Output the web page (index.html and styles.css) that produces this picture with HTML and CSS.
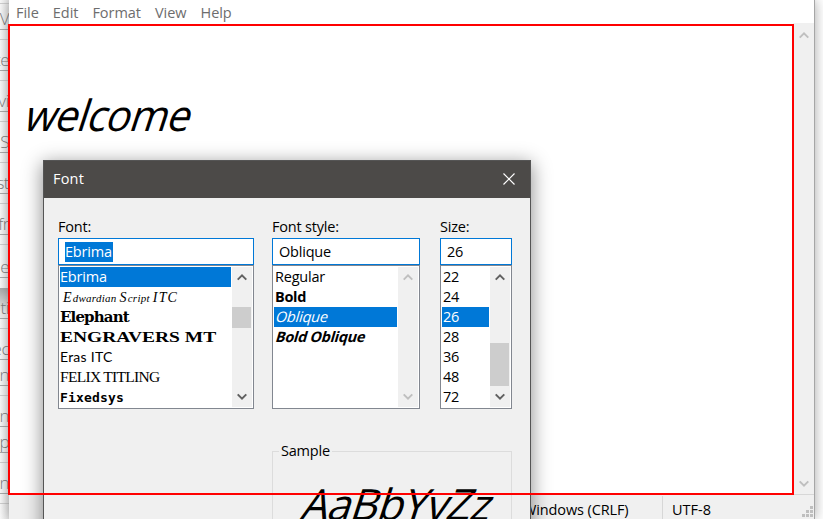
FILE: index.html
```html
<!DOCTYPE html>
<html lang="en">
<head>
<meta charset="utf-8">
<title>Font</title>
<link rel="stylesheet" href="styles.css">
</head>
<body>
<div class="desktop">
  <div class="strip">
    <div class="cell first">V</div>
    <div class="cell">te</div>
    <div class="cell">vi</div>
    <div class="cell">S</div>
    <div class="cell">st</div>
    <div class="cell">fr</div>
    <div class="cell tall">e</div>
    <div class="cell shade">ti</div>
    <div class="cell">ec</div>
    <div class="cell joined">in</div>
    <div class="cell">tin</div>
    <div class="cell joined">op</div>
    <div class="cell">in</div>
    <div class="cell">t</div>
  </div>

  <main class="notepad">
    <nav class="menu"><span>File</span><span>Edit</span><span>Format</span><span>View</span><span>Help</span></nav>
    <div class="workspace">
      <div class="document">welcome</div>
      <div class="scroll page-scroll">
        <svg viewBox="0 0 10 7"><path d="M.7 5.600 5 1.400l4.300 4.200"/></svg>
        <svg viewBox="0 0 10 7"><path d="M.7 1.400 5 5.600 9.300 1.400"/></svg>
      </div>
    </div>
    <footer class="status">
      <span class="eol">Windows (CRLF)</span><span class="encoding">UTF-8</span>
      <svg class="grip" viewBox="0 0 12 12"><path d="M8 0h3v3H8zM4 4h3v3H4zM8 4h3v3H8zM0 8h3v3H0zM4 8h3v3H4zM8 8h3v3H8z"/></svg>
    </footer>
  </main>

  <section class="dialog">
    <header class="title"><span>Font</span>
      <svg viewBox="0 0 12 12"><path d="M.5.5l11 11M11.500.5l-11 11"/></svg>
    </header>
    <div class="choices">
      <div class="field">
        <label>Font:</label>
        <div class="input"><mark>Ebrima</mark></div>
        <div class="list">
          <ul>
            <li class="selected">Ebrima</li>
            <li><span class="edwardian"><b>E</b>dwardian <b>S</b>cript <b>ITC</b></span></li>
            <li><span class="elephant">Elephant</span></li>
            <li><span class="engravers">ENGRAVERS MT</span></li>
            <li><span class="eras">Eras ITC</span></li>
            <li><span class="felix">FELIX TITLING</span></li>
            <li><span class="fixedsys">Fixedsys</span></li>
          </ul>
          <div class="scroll active">
            <svg viewBox="0 0 10 7"><path d="M.7 5.600 5 1.400l4.300 4.200"/></svg>
            <i class="thumb"></i>
            <svg viewBox="0 0 10 7"><path d="M.7 1.400 5 5.600 9.300 1.400"/></svg>
          </div>
        </div>
      </div>
      <div class="field">
        <label>Font style:</label>
        <div class="input">Oblique</div>
        <div class="list">
          <ul>
            <li>Regular</li>
            <li class="bold">Bold</li>
            <li class="selected"><span class="oblique">Oblique</span></li>
            <li class="bold"><span class="oblique">Bold Oblique</span></li>
          </ul>
          <div class="scroll">
            <svg viewBox="0 0 10 7"><path d="M.7 5.600 5 1.400l4.300 4.200"/></svg>
            <svg viewBox="0 0 10 7"><path d="M.7 1.400 5 5.600 9.300 1.400"/></svg>
          </div>
        </div>
      </div>
      <div class="field sizes">
        <label>Size:</label>
        <div class="input">26</div>
        <div class="list">
          <ul>
            <li>22</li><li>24</li><li class="selected">26</li><li>28</li><li>36</li><li>48</li><li>72</li>
          </ul>
          <div class="scroll active">
            <svg viewBox="0 0 10 7"><path d="M.7 5.600 5 1.400l4.300 4.200"/></svg>
            <i class="thumb low"></i>
            <svg viewBox="0 0 10 7"><path d="M.7 1.400 5 5.600 9.300 1.400"/></svg>
          </div>
        </div>
      </div>
    </div>
    <fieldset class="sample">
      <legend>Sample</legend>
      <div class="specimen">AaBbYvZz</div>
    </fieldset>
  </section>
  <div class="highlight"></div>
</div>
</body>
</html>
```
FILE: styles.css
```css
* { box-sizing: border-box; }
body { margin: 0; overflow: hidden; background: #fff; }
.desktop {
  position: relative;
  width: 823px;
  height: 519px;
  overflow: hidden;
  background: #fff;
  color: #000;
  font: 14.5px/20px "Open Sans", "Noto Sans", sans-serif;
  letter-spacing: -0.2px;
  white-space: nowrap;
}
svg { display: block; fill: none; stroke: currentColor; }

/* window that shows behind the editor */
.strip {
  width: 9px;
  height: 519px;
  padding-top: 3px;
  overflow: hidden;
  background: linear-gradient(90deg, #fafafa, #e6e6e6);
  color: #808080;
  font-size: 17px;
  font-weight: 300;
  letter-spacing: -.5px;
}
.cell {
  display: flex;
  justify-content: flex-end;
  align-items: flex-end;
  height: 32px;
  margin-bottom: 9px;
  border-top: 1px solid #cfcfcf;
  border-bottom: 1px solid #aaa;
}
.cell.first { height: 27px; }
.cell.tall { height: 34px; margin-bottom: 10px; }
.cell.shade { height: 31px; border-top: 0; background: linear-gradient(#aaa, #eee 24px); }
.cell.joined { height: 26px; margin-top: -9px; border-top: 0; }

.notepad {
  position: absolute;
  left: 9px;
  top: 0;
  width: 806px;
  height: 519px;
  display: flex;
  flex-direction: column;
  background: #fff;
  border-right: 1px solid #a6a6a6;
  box-shadow: 0 0 12px rgba(0, 0, 0, .35);
}
.menu {
  display: flex;
  gap: 14px;
  height: 23px;
  padding: 3px 0 0 7px;
  color: #6d6d6d;
  letter-spacing: -.04px;
}
.workspace { display: flex; flex: 1; }
.document {
  flex: 1;
  padding: 65px 0 0 14px;
  font-size: 43px;
  line-height: 54px;
  letter-spacing: -.8px;
  transform: skewX(-18deg) scaleX(.955);
  transform-origin: 0 106px;
}
.status {
  display: flex;
  align-items: center;
  height: 25px;
  border-top: 1px solid #d7d7d7;
  background: #f0f0f0;
}
.status span { height: 23px; padding-top: 4px; }
.eol { width: 148px; margin-left: 506px; padding-left: 8px; border-right: 1px solid #d7d7d7; letter-spacing: -.12px; }
.encoding { padding-left: 9px; letter-spacing: 0; }
.grip { width: 12px; height: 12px; margin: 10px 0 0 auto; fill: #bfbfbf; stroke: none; }

.dialog {
  position: absolute;
  left: 43px;
  top: 160px;
  width: 488px;
  height: 420px;
  border: 1px solid #555;
  background: #f0f0f0;
  box-shadow: 0 4px 18px 1px rgba(0, 0, 0, .43);
}
.title {
  display: flex;
  align-items: center;
  justify-content: space-between;
  height: 37px;
  padding: 0 15px 1px 9px;
  background: #4c4a48;
  color: #fff;
  letter-spacing: .2px;
}
.title svg { width: 12px; height: 12px; stroke-width: 1.2; }
.choices {
  display: grid;
  grid-template-columns: 195px 148px 73px;
  gap: 0 19px;
  padding: 19px 0 0 14px;
}
.field:first-child { width: 196px; }
.field.sizes { margin-left: 1px; }
.field label { display: block; height: 21px; }
.input {
  height: 27px;
  padding: 3px 6px;
  border: 1px solid #0078d7;
  background: #fff;
}
mark { display: inline-block; height: 20px; padding: 0 1px 0 0; background: #0078d7; color: #fff; }
.list {
  display: flex;
  justify-content: space-between;
  height: 144px;
  padding: 1px;
  border: 1px solid #828790;
  background: #fff;
}
ul { flex: 1; margin: 0 1px 0 0; padding: 0; list-style: none; }
li { height: 20px; padding-left: 1px; }
.field:first-child li { padding-left: 0; }
.selected { background: #0078d7; color: #fff; }
.bold { font-weight: 700; letter-spacing: -.3px; }
li span { display: inline-block; transform-origin: 0 70%; }
.oblique { transform: skewX(-16deg); }
.scroll {
  position: relative;
  display: flex;
  flex-direction: column;
  align-items: center;
  justify-content: space-between;
  width: 20px;
  padding: 7px 0;
  background: #f0f0f0;
  color: #bfbfbf;
}
.scroll svg { width: 10px; height: 7px; stroke-width: 2; }
.scroll.active { color: #606060; }
.scroll.page-scroll { width: 21px; padding: 9px 0 7px; }
.thumb { position: absolute; left: 0; top: 40px; width: 19px; height: 21px; background: #cdcdcd; }
.thumb.low { top: 76px; height: 43px; }

.edwardian { font: italic 11px/20px "Liberation Serif", serif; letter-spacing: .25px; margin-left: 3px; }
.edwardian b { font-weight: 400; font-size: 14px; letter-spacing: 1.2px; }
.elephant { font: bold 15px/20px "DejaVu Serif", serif; letter-spacing: -.85px; }
.engravers { font: bold 15px/20px "Liberation Serif", serif; transform: scaleX(1.3); letter-spacing: 0; }
.eras { font: 14px/20px Lato, sans-serif; letter-spacing: .25px; }
.felix { font: 15.5px/20px "Liberation Serif", serif; letter-spacing: -.7px; }
.fixedsys { font: bold 13px/18px "DejaVu Sans Mono", monospace; letter-spacing: .17px; }

.sample {
  width: 240px;
  height: 130px;
  margin: 32px 0 0 228px;
  padding: 0;
  border: 1px solid #dcdcdc;
}
.sample legend { margin-left: 6px; padding: 0 2px; }
.specimen {
  margin: 16px 0 0 26px;
  font-size: 43px;
  line-height: 54px;
  letter-spacing: -.9px;
  transform: skewX(-18deg);
  transform-origin: 0 43px;
}
.highlight {
  position: absolute;
  left: 8px;
  top: 24px;
  width: 786px;
  height: 471px;
  border: 2px solid #f00;
}
```
